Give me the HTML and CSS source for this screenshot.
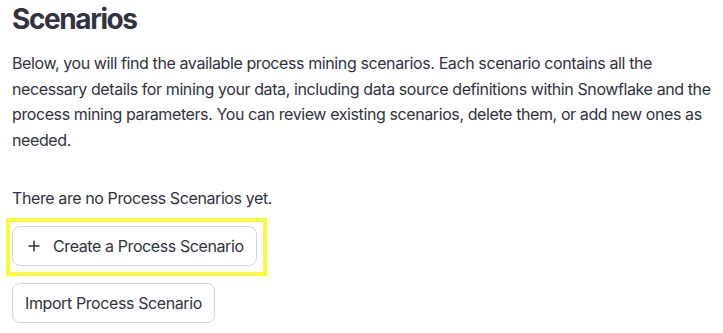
FILE: index.html
```html
<!DOCTYPE html>
<html lang="en">
<head>
<meta charset="utf-8">
<title>Scenarios</title>
<link rel="stylesheet" href="styles.css">
</head>
<body>
<main class="page">
  <h1 class="title">Scenarios</h1>
  <p class="intro">Below, you will find the available process mining scenarios. Each scenario contains all the necessary details for mining your data, including data source definitions within Snowflake and the process mining parameters. You can review existing scenarios, delete them, or add new ones as needed.</p>
  <p class="empty">There are no Process Scenarios yet.</p>
  <div class="highlight">
    <button class="btn" type="button">
      <svg class="icon" viewBox="0 0 14 14" width="14" height="14" aria-hidden="true"><path d="M7 1.5v11M1.5 7h11" stroke="#31333f" stroke-width="1.5" fill="none"/></svg>
      <span>Create a Process Scenario</span>
    </button>
  </div>
  <button class="btn btn-import" type="button">Import Process Scenario</button>
</main>
</body>
</html>
```
FILE: styles.css
```css
html, body {
  margin: 0;
  padding: 0;
  background: #ffffff;
}
body {
  font-family: Inter, "Noto Sans", "Liberation Sans", sans-serif;
  color: #31333f;
}
.page {
  padding: 0 6px 0 12px;
  display: flex;
  flex-direction: column;
  align-items: flex-start;
}
.title {
  font-size: 28px;
  font-weight: 700;
  line-height: 36px;
  margin: 1px 0 0 0;
  letter-spacing: -1.4px;
}
.intro {
  font-size: 16px;
  line-height: 25.6px;
  margin: 14px 0 0 0;
  letter-spacing: -0.4px;
}
.empty {
  font-size: 16px;
  line-height: 25.6px;
  margin: 33px 0 0 0;
  letter-spacing: -0.4px;
}
.highlight {
  border: 4px solid #fbf93c;
  padding: 4px 6px 6px 2px;
  margin: 6px 0 0 -6px;
}
.btn {
  display: inline-flex;
  align-items: center;
  height: 40px;
  padding: 0 12px;
  border: 1px solid #d5d6d9;
  border-radius: 8px;
  background: #ffffff;
  font-family: inherit;
  font-size: 16px;
  letter-spacing: -0.4px;
  color: #31333f;
}
.icon {
  margin: 0 12px 0 2px;
}
.btn-import {
  margin-top: 7px;
}
```
